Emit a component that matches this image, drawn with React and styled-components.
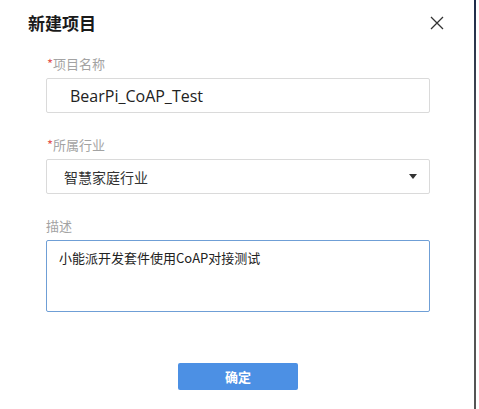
import React from 'react';
import styled, { createGlobalStyle } from 'styled-components';

const GlobalStyle = createGlobalStyle`
  html, body {
    margin: 0;
    padding: 0;
    background: #fff;
  }
  body {
    font-family: "Microsoft YaHei", "Noto Sans CJK SC", "Noto Sans", sans-serif;
  }
`;

const Dialog = styled.div`
  width: 476px;
  height: 409px;
  box-sizing: border-box;
  border-right: 2px solid transparent;
  border-image: linear-gradient(to bottom, #1c2b4a, #555 40%, #555) 1;
  background: #fff;
`;

const Header = styled.div`
  display: flex;
  align-items: center;
  justify-content: space-between;
  padding: 12px 30px 0 28px;
  height: 22px;
`;

const Title = styled.h1`
  margin: 0;
  font-size: 17px;
  line-height: 22px;
  font-weight: 700;
  color: #1a1a1a;
`;

const CloseButton = styled.button`
  border: none;
  background: none;
  padding: 0;
  width: 14px;
  height: 14px;
  display: flex;
  cursor: pointer;
`;

const Form = styled.div`
  display: flex;
  flex-direction: column;
  padding: 21px 46px 0 46px;
  width: 384px;
`;

const Field = styled.div`
  display: flex;
  flex-direction: column;
  gap: 5px;
  margin-bottom: ${(p) => p.$gap ?? 23}px;
`;

const Label = styled.label`
  font-size: 13px;
  line-height: 18px;
  color: #a3a3a3;
  padding-left: ${(p) => (p.$required ? 1 : 0)}px;
`;

const Star = styled.span`
  color: #e4554f;
`;

const TextInput = styled.input`
  box-sizing: border-box;
  width: 384px;
  height: 35px;
  border: 1px solid #dadada;
  border-radius: 2px;
  padding: 0 0 0 23px;
  font-family: "Open Sans", "Noto Sans", sans-serif;
  font-size: 16px;
  color: #222;
  outline: none;
`;

const SelectBox = styled.div`
  box-sizing: border-box;
  width: 384px;
  height: 35px;
  border: 1px solid #dadada;
  border-radius: 2px;
  padding: 0 12px 0 17px;
  display: flex;
  align-items: center;
  justify-content: space-between;
  font-size: 14px;
  color: #333;
`;

const Caret = styled.span`
  width: 0;
  height: 0;
  border-left: 4px solid transparent;
  border-right: 4px solid transparent;
  border-top: 5px solid #333;
`;

const TextArea = styled.textarea`
  box-sizing: border-box;
  width: 384px;
  height: 72px;
  border: 1px solid #6f9fd6;
  border-radius: 2px;
  padding: 7px 12px;
  font-family: "Microsoft YaHei", "Noto Sans CJK SC", sans-serif;
  font-size: 13px;
  line-height: 20px;
  color: #222;
  resize: none;
  outline: none;
`;

const Footer = styled.div`
  display: flex;
  justify-content: center;
  padding-top: 51px;
  padding-left: 2px;
`;

const PrimaryButton = styled.button`
  width: 120px;
  height: 27px;
  border: none;
  border-radius: 2px;
  background: #4c90e4;
  color: #fff;
  font-family: "Microsoft YaHei", "Noto Sans CJK SC", sans-serif;
  font-size: 13px;
  font-weight: 700;
  cursor: pointer;
`;

export default function App() {
  return (
    <>
      <GlobalStyle />
      <Dialog>
        <Header>
          <Title>新建项目</Title>
          <CloseButton aria-label="close">
            <svg width="14" height="14" viewBox="0 0 14 14">
              <path d="M1 1 L13 13 M13 1 L1 13" stroke="#333" strokeWidth="1.3" fill="none" />
            </svg>
          </CloseButton>
        </Header>
        <Form>
          <Field>
            <Label $required>
              <Star>*</Star>项目名称
            </Label>
            <TextInput defaultValue="BearPi_CoAP_Test" />
          </Field>
          <Field>
            <Label $required>
              <Star>*</Star>所属行业
            </Label>
            <SelectBox>
              <span>智慧家庭行业</span>
              <Caret />
            </SelectBox>
          </Field>
          <Field $gap={0}>
            <Label>描述</Label>
            <TextArea defaultValue="小能派开发套件使用CoAP对接测试" />
          </Field>
        </Form>
        <Footer>
          <PrimaryButton>确定</PrimaryButton>
        </Footer>
      </Dialog>
    </>
  );
}
